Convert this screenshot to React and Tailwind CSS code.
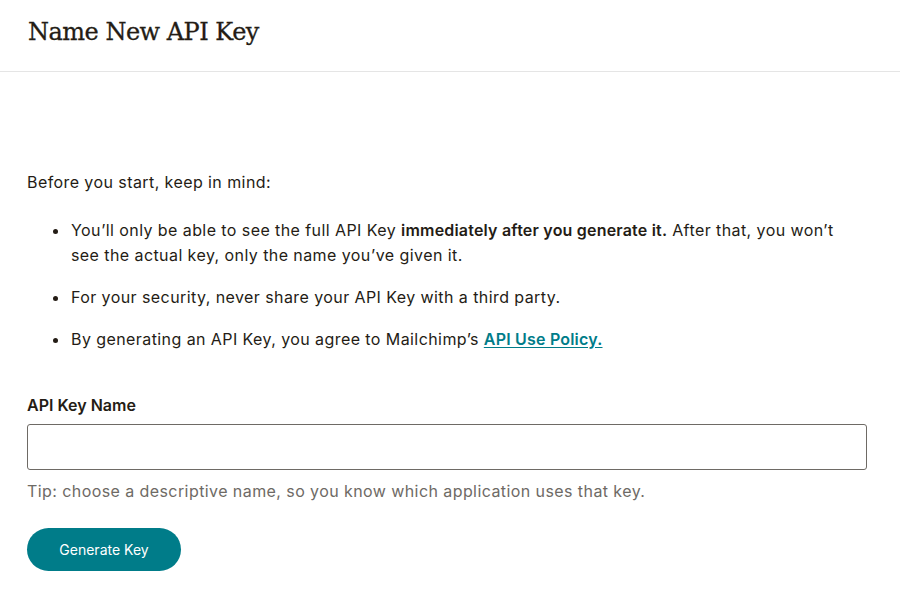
import React, { useState } from "react";

const App = () => {
  const [name, setName] = useState("");

  return (
    <div className="min-h-screen w-full bg-white text-[#241c15] font-['Inter',sans-serif]">
      {/* Header */}
      <div className="h-[72px] border-b border-[#e5e5e5] px-[28px] flex items-center">
        <h1 className="text-[24px] leading-none pb-[8px] font-['DejaVu_Serif',serif] tracking-[-0.5px] [-webkit-text-stroke:0.3px_#241c15]">
          Name New API Key
        </h1>
      </div>

      {/* Body */}
      <div className="px-[27px] pt-[98px] text-[16px] leading-[25px] tracking-[0.42px]">
        <p>Before you start, keep in mind:</p>

        <ul className="mt-[23px] pl-[43px] list-disc space-y-[17px] marker:text-[#241c15]">
          <li className="pl-[1px]">
            You’ll only be able to see the full API Key{" "}
            <strong className="font-semibold tracking-[0.2px]">immediately after you generate it.</strong> After that, you won’t
            <br />
            see the actual key, only the name you’ve given it.
          </li>
          <li className="pl-[1px]">For your security, never share your API Key with a third party.</li>
          <li className="pl-[1px]">
            By generating an API Key, you agree to Mailchimp’s{" "}
            <a href="#" className="font-semibold tracking-[0.2px] text-[#007c89] underline underline-offset-2">
              API Use Policy.
            </a>
          </li>
        </ul>

        <label className="block mt-[41px] font-semibold tracking-normal">API Key Name</label>
        <input
          type="text"
          value={name}
          onChange={(e) => setName(e.target.value)}
          className="mt-[6px] block w-[840px] h-[46px] rounded-[3px] border border-[#6e6a65] px-3 focus:outline-none"
        />
        <p className="mt-[9px] text-[#6e6a65]">
          Tip: choose a descriptive name, so you know which application uses that key.
        </p>

        <button className="mt-[24px] w-[154px] h-[43px] rounded-full bg-[#007c89] text-white text-[14px] tracking-normal">
          Generate Key
        </button>
      </div>
    </div>
  );
};

export default App;
